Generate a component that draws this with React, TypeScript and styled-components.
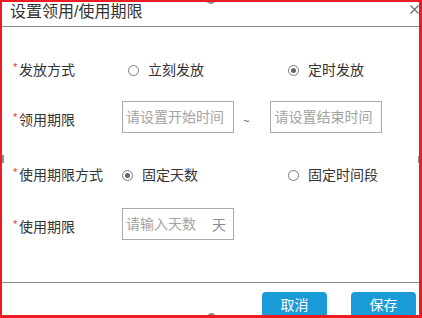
import React from 'react';
import styled, { createGlobalStyle, css } from 'styled-components';

const GlobalStyle = createGlobalStyle`
  html, body {
    margin: 0;
    padding: 0;
    background: #ffffff;
  }

  body {
    font-family: 'Liberation Sans', 'Noto Sans CJK SC', sans-serif;
    color: #333333;
  }

  * {
    box-sizing: border-box;
  }
`;

const Dialog = styled.div`
  position: relative;
  display: flex;
  flex-direction: column;
  width: 422px;
  height: 318px;
  background: #ffffff;
  border: 2px solid #ed1c24;
  border-right-width: 3px;
  border-bottom-width: 3px;
  overflow: hidden;
`;

const Header = styled.div`
  display: flex;
  align-items: flex-start;
  justify-content: space-between;
  height: 25px;
  padding-left: 8px;
  border-bottom: 1px solid #8c8c8c;
  flex-shrink: 0;
`;

const Title = styled.h2`
  margin: 0;
  font-size: 16px;
  font-weight: 400;
  line-height: 20px;
  color: #333333;
`;

const CloseButton = styled.button`
  display: flex;
  margin-top: 3px;
  padding: 0;
  border: none;
  background: none;
  cursor: pointer;
`;

const Body = styled.div`
  flex: 1;
  display: flex;
  flex-direction: column;
  gap: 26px;
  padding: 27px 0 0 11px;
`;

const Section = styled.div<{ $gap: number }>`
  display: flex;
  flex-direction: column;
  gap: ${({ $gap }) => $gap}px;
`;

const Row = styled.div<{ $height?: number }>`
  display: flex;
  align-items: center;
  height: ${({ $height }) => $height ?? 32}px;
`;

const Label = styled.div<{ $drop?: number }>`
  width: 109px;
  flex-shrink: 0;
  font-size: 14px;
  line-height: 18px;
  color: #333333;
  padding-top: ${({ $drop }) => ($drop ?? 0) * 2}px;
  white-space: nowrap;
`;

const Required = styled.span`
  display: inline-block;
  width: 6px;
  font-size: 11px;
  line-height: 10px;
  color: #e8343c;
  vertical-align: top;
  margin-top: 1px;
`;

const RadioGroup = styled.div`
  display: grid;
  grid-template-columns: 166px auto;
  align-items: center;
`;

const RadioOption = styled.label<{ $indent?: number }>`
  display: flex;
  align-items: center;
  gap: 9px;
  padding-left: ${({ $indent }) => $indent ?? 0}px;
  font-size: 14px;
  line-height: 18px;
  color: #333333;
  cursor: pointer;
`;

const RadioMark = styled.span<{ $checked?: boolean }>`
  position: relative;
  width: 11px;
  height: 11px;
  border: 1px solid #7a7a7a;
  border-radius: 50%;
  flex-shrink: 0;

  ${({ $checked }) =>
    $checked &&
    css`
      &::after {
        content: '';
        position: absolute;
        left: 2px;
        top: 2px;
        width: 5px;
        height: 5px;
        border-radius: 50%;
        background: #666666;
      }
    `}
`;

const InputBox = styled.div`
  display: flex;
  align-items: center;
  width: 112px;
  height: 32px;
  border: 1px solid #a9a9a9;
  background: #ffffff;
`;

const TextInput = styled.input`
  flex: 1;
  min-width: 0;
  height: 100%;
  padding: 0 0 0 3px;
  border: none;
  outline: none;
  background: transparent;
  font-family: inherit;
  font-size: 14px;
  color: #333333;

  &::placeholder {
    color: #a3a3a3;
  }
`;

const Suffix = styled.span`
  padding-right: 7px;
  font-size: 14px;
  color: #8a8a8a;
`;

const Tilde = styled.span`
  margin: 0 21px 0 9px;
  padding-top: 8px;
  font-size: 11px;
  color: #555555;
`;

const Footer = styled.div`
  display: flex;
  justify-content: flex-end;
  align-items: flex-start;
  gap: 24px;
  height: 33px;
  padding: 9px 3px 0 0;
  border-top: 1px solid #8c8c8c;
  flex-shrink: 0;
`;

const Button = styled.button`
  width: 65px;
  height: 25px;
  padding: 0;
  border: none;
  border-radius: 4px;
  background: #1a9ad6;
  color: #ffffff;
  font-family: inherit;
  font-size: 14px;
  line-height: 22px;
  cursor: pointer;
`;

const Handle = styled.span<{ $side: 'top' | 'bottom' | 'left' | 'right' }>`
  position: absolute;
  background: #8f8f8f;

  ${({ $side }) => {
    switch ($side) {
      case 'top':
        return css`
          top: -8px;
          left: 204px;
          width: 10px;
          height: 10px;
          border-radius: 50%;
        `;
      case 'bottom':
        return css`
          bottom: -8px;
          left: 205px;
          width: 9px;
          height: 10px;
          border-radius: 50%;
        `;
      case 'left':
        return css`
          left: 0;
          top: 153px;
          width: 2px;
          height: 8px;
        `;
      default:
        return css`
          right: 0;
          top: 154px;
          width: 1px;
          height: 7px;
        `;
    }
  }}
`;

const CloseIcon = () => (
  <svg width="9" height="9" viewBox="0 0 9 9">
    <path d="M0.5 0.5 L8.5 8.5 M8.5 0.5 L0.5 8.5" stroke="#666666" strokeWidth="1.1" />
  </svg>
);

const RequiredLabel: React.FC<{ text: string; drop?: number }> = ({ text, drop }) => (
  <Label $drop={drop}>
    <Required>*</Required>
    {text}
  </Label>
);

export default function App() {
  return (
    <>
      <GlobalStyle />
      <Dialog>
        <Header>
          <Title>设置领用/使用期限</Title>
          <CloseButton aria-label="关闭">
            <CloseIcon />
          </CloseButton>
        </Header>

        <Body>
          <Section $gap={15}>
            <Row>
              <RequiredLabel text="发放方式" />
              <RadioGroup>
                <RadioOption $indent={6}>
                  <RadioMark />
                  立刻发放
                </RadioOption>
                <RadioOption>
                  <RadioMark $checked />
                  定时发放
                </RadioOption>
              </RadioGroup>
            </Row>
            <Row>
              <RequiredLabel text="领用期限" drop={3} />
              <InputBox>
                <TextInput placeholder="请设置开始时间" />
              </InputBox>
              <Tilde>~</Tilde>
              <InputBox>
                <TextInput placeholder="请设置结束时间" />
              </InputBox>
            </Row>
          </Section>

          <Section $gap={16}>
            <Row>
              <RequiredLabel text="使用期限方式" />
              <RadioGroup>
                <RadioOption>
                  <RadioMark $checked />
                  固定天数
                </RadioOption>
                <RadioOption>
                  <RadioMark />
                  固定时间段
                </RadioOption>
              </RadioGroup>
            </Row>
            <Row $height={33}>
              <RequiredLabel text="使用期限" drop={3} />
              <InputBox>
                <TextInput placeholder="请输入天数" />
                <Suffix>天</Suffix>
              </InputBox>
            </Row>
          </Section>
        </Body>

        <Footer>
          <Button>取消</Button>
          <Button>保存</Button>
        </Footer>

        <Handle $side="top" />
        <Handle $side="bottom" />
        <Handle $side="left" />
        <Handle $side="right" />
      </Dialog>
    </>
  );
}
